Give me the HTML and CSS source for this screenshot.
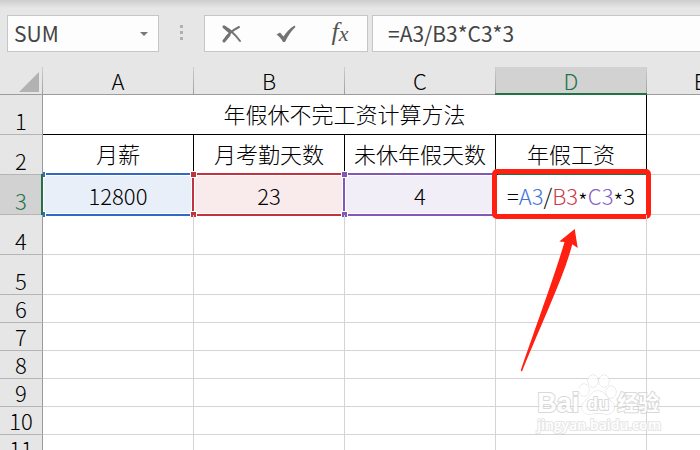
FILE: index.html
```
<!DOCTYPE html>
<html lang="zh-CN">

<head>
  <meta charset="UTF-8">
  <meta name="viewport" content="width=device-width, initial-scale=1">
  <title>年假休不完工资计算方法</title>
  <link rel="stylesheet" href="styles.css">
</head>

<body>
  <div class="toolbar">
    <div class="name-box">
      <input type="text" value="SUM" aria-label="名称框">
      <button type="button" aria-label="展开名称框">
        <svg width="8" height="4" viewBox="0 0 8 4"><path d="M0 0h8L4 4z" fill="#777" /></svg>
      </button>
    </div>
    <div class="grip"><i></i><i></i><i></i></div>
    <div class="actions">
      <button type="button" aria-label="取消">
        <svg width="20" height="18" viewBox="0 0 20 18">
          <path d="M2 2C6 3 13 9 18 16M17 2C11 5 5 10 2 16" fill="none" stroke="#737373" stroke-width="2" stroke-linecap="round" />
          <path d="M2 1.8L8 7" stroke="#737373" stroke-width="3" stroke-linecap="round" />
          <path d="M2 16L7 10" stroke="#737373" stroke-width="3" stroke-linecap="round" />
        </svg>
      </button>
      <button type="button" aria-label="输入">
        <svg width="20" height="18" viewBox="0 0 20 18">
          <path d="M0.5 9.5L4 7.5L7.5 11.5C10 7.5 14 3 18.5 0.5L19.5 2C15 6 11.5 11.5 9 17H7C5.5 14 3 11 0.5 9.5z" fill="#737373" />
        </svg>
      </button>
      <button type="button" class="fx" aria-label="插入函数">f<span>x</span></button>
    </div>
    <input class="formula" type="text" value="=A3/B3*C3*3" aria-label="编辑栏">
  </div>

  <div class="sheet">
    <table>
      <colgroup>
        <col class="col-num">
        <col class="col" span="4">
        <col class="col-last">
      </colgroup>
      <thead>
        <tr>
          <th class="corner"><svg width="20" height="20" viewBox="0 0 20 20"><path d="M20 0v20H0z" fill="#b2b2b2" /></svg></th>
          <th>A</th>
          <th>B</th>
          <th>C</th>
          <th class="active">D</th>
          <th>E</th>
        </tr>
      </thead>
      <tbody>
        <tr class="tall">
          <th>1</th>
          <td class="box" colspan="4">年假休不完工资计算方法</td>
          <td></td>
        </tr>
        <tr class="tall">
          <th>2</th>
          <td class="box">月薪</td>
          <td class="box">月考勤天数</td>
          <td class="box">未休年假天数</td>
          <td class="box">年假工资</td>
          <td></td>
        </tr>
        <tr class="tall">
          <th class="active">3</th>
          <td class="ref blue">12800<i></i></td>
          <td class="ref red">23<i></i></td>
          <td class="ref purple">4<i></i></td>
          <td class="editing">=<span class="t-blue">A3</span>/<span class="t-red">B3</span><span class="star">*</span><span class="t-purple">C3</span><span class="star">*</span>3</td>
          <td></td>
        </tr>
        <tr class="tall">
          <th>4</th><td></td><td></td><td></td>
          <td class="pointer">
            <svg width="60" height="146" viewBox="0 0 60 146">
              <path d="M54.7 2L39.3 14.5L44.5 15C36 44 20 88 0.7 143.5L2 144.5C26 86 44 49 52.3 17.3L57.7 21z" fill="#ff2012" />
            </svg>
          </td>
          <td></td>
        </tr>
        <tr class="tall"><th>5</th><td></td><td></td><td></td><td></td><td></td></tr>
        <tr><th>6</th><td></td><td></td><td></td><td></td><td></td></tr>
        <tr><th>7</th><td></td><td></td><td></td><td></td><td></td></tr>
        <tr><th>8</th><td></td><td></td><td></td><td></td><td></td></tr>
        <tr><th>9</th><td></td><td></td><td></td><td></td><td></td></tr>
        <tr><th>10</th><td></td><td></td><td></td><td></td><td></td></tr>
        <tr><th>11</th><td></td><td></td><td></td><td></td><td></td></tr>
      </tbody>
    </table>

    <div class="watermark">
      <div class="wm-name">
        <span class="wm-latin">Bai</span>
        <svg width="38" height="42" viewBox="0 0 38 42">
          <g fill="#fff" stroke="#d0d0d0">
            <ellipse cx="5" cy="17" rx="5" ry="6" />
            <ellipse cx="14" cy="8" rx="5" ry="6" />
            <ellipse cx="25" cy="8" rx="5" ry="6" />
            <ellipse cx="32" cy="19" rx="5" ry="6" />
            <path d="M19 18C12 18 11 24 6 28C0 33 3 41 10 41C14 41 16 40 19 40C22 40 24 41 28 41C35 41 38 33 32 28C27 24 26 18 19 18z" />
          </g>
          <text class="wm-du" x="19" y="37" text-anchor="middle">du</text>
        </svg>
        <span class="wm-cn">经验</span>
      </div>
      <div class="wm-url">jingyan.baidu.com</div>
    </div>
  </div>
</body>

</html>
```
FILE: styles.css
```
*,
*::before,
*::after {
  box-sizing: border-box;
}

body {
  margin: 0;
  height: 100vh;
  display: flex;
  flex-direction: column;
  overflow: hidden;
  background: #fff;
  font: 300 22px/24px "Noto Sans CJK SC", sans-serif;
  color: #000;
}

input,
button {
  margin: 0;
  padding: 0;
  border: 0;
  background: none;
  font: 400 21px/24px "Noto Sans CJK SC", sans-serif;
  color: #444;
  outline: none;
}

/* 编辑栏 */
.toolbar {
  flex: none;
  display: flex;
  padding: 15px 0;
  background: linear-gradient(#cdcdcd, #e6e6e6 8px);
}

.name-box,
.actions,
.formula {
  height: 37px;
  border: 1px solid #c6c6c6;
  background: #fdfdfd;
}

.name-box {
  display: flex;
  width: 152px;
  margin-left: 7px;
}

.name-box input {
  flex: 1;
  min-width: 0;
  padding: 0 0 2px 6px;
}

.name-box button {
  width: 28px;
  display: flex;
  align-items: center;
  justify-content: center;
}

.grip {
  width: 45px;
  display: flex;
  flex-direction: column;
  align-items: center;
  justify-content: center;
  gap: 3px;
  padding-bottom: 2px;
}

.grip i {
  width: 3px;
  height: 3px;
  background: #b0b0b0;
}

.actions {
  display: flex;
  width: 164px;
  margin-right: 4px;
}

.actions button {
  flex: 1;
  display: flex;
  align-items: center;
  justify-content: center;
}

.actions .fx {
  font: italic 400 26px/26px "Liberation Serif", serif;
  color: #555;
  padding-bottom: 4px;
}

.fx span {
  font-size: 22px;
  padding-top: 4px;
}

.formula {
  flex: 1;
  min-width: 0;
  padding: 0 0 2px 15px;
  border-right: 0;
}

/* 表格 */
.sheet {
  position: relative;
  flex: 1;
  min-height: 0;
  overflow: hidden;
}

table {
  table-layout: fixed;
  width: 754px;
  border-collapse: separate;
  border-spacing: 0;
}

.col-num {
  width: 43px;
}

.col {
  width: 151px;
}

tr {
  height: 28px;
}

.tall {
  height: 40px;
}

th,
td {
  position: relative;
  padding: 0;
  border-right: 1px solid #d4d4d4;
  border-bottom: 1px solid #d4d4d4;
  text-align: center;
  white-space: nowrap;
}

th {
  font-weight: 300;
  background: #e6e6e6;
}

thead th {
  padding-bottom: 1px;
  border-bottom-color: #9b9b9b;
  border-image: linear-gradient(#d0d0d0, #9b9b9b) 1;
}

.corner {
  padding-right: 3px;
}

.corner svg {
  display: block;
  margin: 4px 0 0 auto;
}

tbody th {
  vertical-align: bottom;
  padding-bottom: 2px;
  border-right-color: #9b9b9b;
  border-bottom-color: #b5b5b5;
}

.active {
  color: #217346;
  background: #d2d2d2;
}

thead .active::after {
  content: "";
  position: absolute;
  left: -1px;
  right: -1px;
  bottom: -1px;
  height: 2px;
  background: #217346;
}

tbody .active::after {
  content: "";
  position: absolute;
  top: -1px;
  bottom: -1px;
  right: -1px;
  width: 2px;
  background: #217346;
}

.box {
  border-color: #000;
  padding-bottom: 3px;
}

/* 公式引用的区域 */
.blue {
  --line: #3169c6;
  --fill: #e9eff9;
}

.red {
  --line: #c0343f;
  --fill: #f9ebeb;
}

.purple {
  --line: #8257b8;
  --fill: #f2eef8;
}

.ref {
  background: var(--fill);
}

.ref::before {
  content: "";
  position: absolute;
  top: -2px;
  right: -1px;
  bottom: -2px;
  left: -2px;
  border: 2px solid var(--line);
  box-shadow: inset 0 0 0 1px #fff;
}

.ref i::before,
.ref i::after {
  content: "";
  position: absolute;
  left: -4px;
  width: 7px;
  height: 7px;
  border: 1px solid #fff;
  background: var(--line);
}

.ref i::before {
  top: -4px;
}

.ref i::after {
  bottom: -4px;
}

/* 第一列左边被行号遮住 */
.ref.blue::before {
  left: 0;
  border-left: 0;
}

.blue i::before,
.blue i::after {
  left: 0;
  width: 3px;
  border-left: 0;
}

.t-blue {
  color: #3f74d6;
}

.t-red {
  color: #cb3a48;
}

.t-purple {
  color: #8a5cc4;
}

.star {
  line-height: 0;
  vertical-align: -5px;
}

.editing::before {
  content: "";
  position: absolute;
  left: 2px;
  right: 0;
  top: -1px;
  height: 1px;
  background: #217346;
}

.editing::after {
  content: "";
  position: absolute;
  top: -6px;
  right: -5px;
  bottom: -5px;
  left: -4px;
  border: 5px solid #ff2012;
  border-radius: 5px;
}

.editing,
.pointer {
  z-index: 1;
}

.pointer svg {
  position: absolute;
  left: 24px;
  top: 12px;
}

/* 水印 */
.watermark {
  position: absolute;
  right: 39px;
  bottom: 15px;
  z-index: 2;
  font-family: "Liberation Sans", "Noto Sans CJK SC", sans-serif;
  font-weight: 700;
  color: #fff;
  opacity: 0.8;
  -webkit-text-stroke: 2px #d0d0d0;
  paint-order: stroke fill;
}

.wm-name {
  display: flex;
  align-items: flex-end;
}

.wm-name svg {
  -webkit-text-stroke: 0;
}

.wm-latin {
  font-size: 27px;
}

.wm-cn {
  font-size: 21px;
}

.wm-du {
  font-size: 18px;
  fill: #fff;
  stroke: #d0d0d0;
  stroke-width: 2px;
}

.wm-url {
  font: 600 14px/20px "Open Sans", sans-serif;
  -webkit-text-stroke: 2px #e0e0e0;
}
```
